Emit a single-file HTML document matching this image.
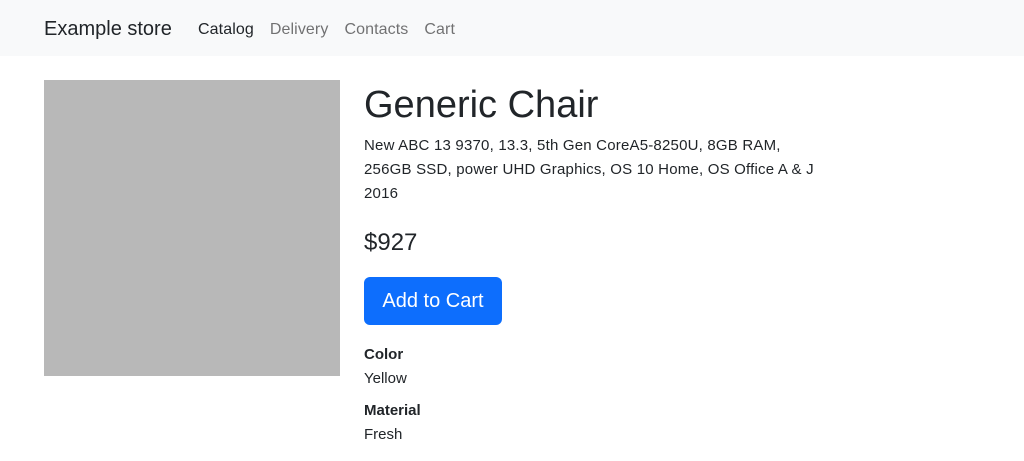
<!DOCTYPE html>
<html><head><meta charset="utf-8"><style>
*{box-sizing:border-box;margin:0;padding:0}
body{width:1024px;height:461px;overflow:hidden;background:#fff;font-family:"Liberation Sans",sans-serif;color:#212529}
.nav{height:56px;background:#f8f9fa;position:relative}
.brand{position:absolute;left:44px;top:18px;font-size:20px;color:#212529}
.links{position:absolute;left:198px;top:21px;font-size:16px;color:rgba(0,0,0,.55);letter-spacing:0.1px}
.links span{margin-right:16px}
.links span.a{color:#212529}
.img{position:absolute;left:44px;top:80px;width:296px;height:296px;background:#b8b8b8}
.c{position:absolute;left:364px;top:80px;width:520px}
h1{font-size:38px;font-weight:500;line-height:46px;margin-top:2px}
.d{font-size:15px;line-height:24px;margin-top:6px;letter-spacing:0.2px}
.p{font-size:24px;margin-top:21px;line-height:32px}
.btn{display:inline-block;margin-top:18px;background:#0d6efd;color:#fff;font-size:20px;width:138px;height:48px;line-height:48px;text-align:center;border-radius:6px}
.l{font-weight:bold;font-size:15px;line-height:24px;margin-top:18px}
.v{font-size:15px;line-height:24px}
.l2{margin-top:8px}
</style></head><body>
<div class="nav"><div class="brand">Example store</div>
<div class="links"><span class="a">Catalog</span><span>Delivery</span><span>Contacts</span><span>Cart</span></div></div>
<div class="img"></div>
<div class="c">
<h1>Generic Chair</h1>
<div class="d">New ABC 13 9370, 13.3, 5th Gen CoreA5-8250U, 8GB RAM,<br>256GB SSD, power UHD Graphics, OS 10 Home, OS Office A &amp; J<br>2016</div>
<div class="p">$927</div>
<div class="btn">Add to Cart</div>
<div class="l">Color</div><div class="v">Yellow</div>
<div class="l l2">Material</div><div class="v">Fresh</div>
</div>
</body></html>
